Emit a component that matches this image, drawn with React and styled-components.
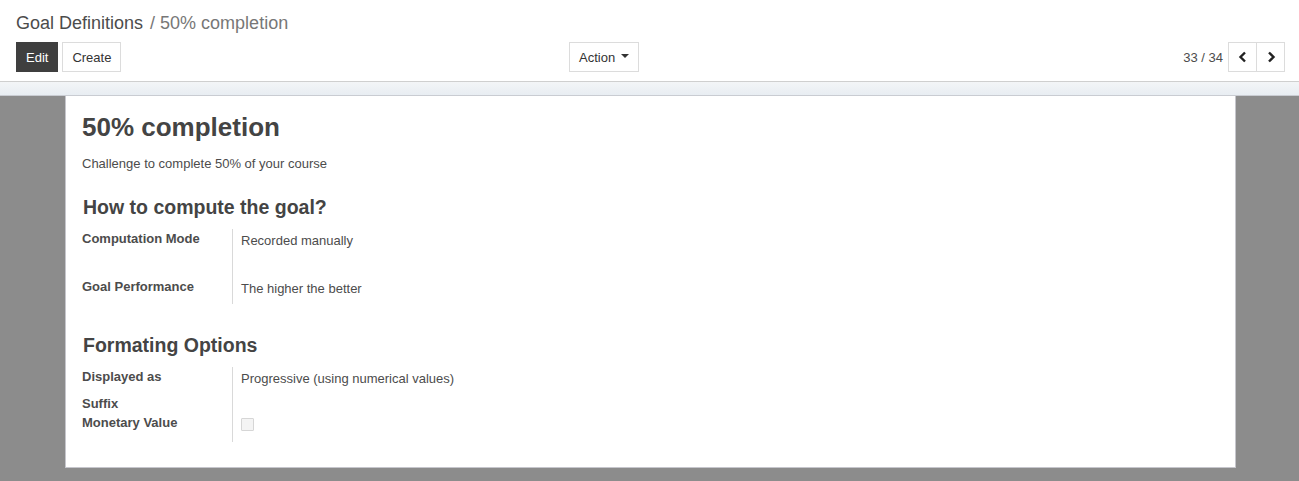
import React from "react";
import styled, { createGlobalStyle } from "styled-components";

const GlobalStyle = createGlobalStyle`
    html, body {
        margin: 0;
        padding: 0;
        height: 100%;
        background: #ffffff;
        font-family: "Liberation Sans", Arial, sans-serif;
        color: #4c4c4c;
    }
    #root {
        height: 100%;
    }
`;

const Page = styled.div`
    height: 481px;
    display: flex;
    flex-direction: column;
    overflow: hidden;
`;

const ControlPanel = styled.div`
    height: 82px;
    box-sizing: border-box;
    padding: 12px 14px 0 16px;
    border-bottom: 1px solid #cfcfcf;
    background: #ffffff;
`;

const Breadcrumb = styled.div`
    font-size: 18px;
    line-height: 22px;
    color: #4c4c4c;
    span {
        color: #777777;
        margin-left: 2px;
    }
`;

const ButtonBar = styled.div`
    margin-top: 8px;
    display: grid;
    grid-template-columns: 553px auto 1fr;
    align-items: center;
`;

const Group = styled.div`
    display: flex;
    align-items: center;
    gap: ${(p) => p.gap || 0}px;
    justify-content: ${(p) => p.justify || "flex-start"};
`;

const Button = styled.button`
    height: 30px;
    box-sizing: border-box;
    padding: 0 9px;
    font-family: inherit;
    font-size: 13px;
    border: 1px solid ${(p) => (p.primary ? "#3f3f3f" : "#dcdcdc")};
    background: ${(p) => (p.primary ? "#3f3f3f" : "#ffffff")};
    color: ${(p) => (p.primary ? "#ffffff" : "#333333")};
    display: flex;
    align-items: center;
    gap: 6px;
    cursor: pointer;
`;

const Caret = styled.span`
    width: 0;
    height: 0;
    border-left: 4px solid transparent;
    border-right: 4px solid transparent;
    border-top: 4px solid #333;
    margin-top: -3px;
`;

const PagerText = styled.span`
    font-size: 13px;
    color: #4c4c4c;
    margin-right: 5px;
`;

const PagerButton = styled(Button)`
    width: 29px;
    padding: 0;
    justify-content: center;
    & + & {
        margin-left: -1px;
    }
`;

const Strip = styled.div`
    height: 13px;
    background: linear-gradient(#f3f5f7, #e8edf2);
    border-bottom: 1px solid #c9ccd2;
`;

const SheetBg = styled.div`
    flex: 1;
    background: #8c8c8c;
    padding: 0 63px 0 65px;
`;

const Sheet = styled.div`
    background: #ffffff;
    border: 1px solid #c6c6cc;
    border-top: none;
    height: 372px;
    box-sizing: border-box;
    padding: 16px 16px 0 16px;
`;

const Title = styled.h1`
    margin: 0;
    font-size: 26px;
    line-height: 30px;
    font-weight: bold;
    color: #444444;
`;

const Description = styled.div`
    margin-top: 14px;
    font-size: 13px;
    line-height: 16px;
`;

const SectionTitle = styled.h2`
    margin: ${(p) => p.top}px 0 0 1px;
    font-size: 19.5px;
    line-height: 24px;
    font-weight: bold;
    color: #444444;
`;

const FieldTable = styled.div`
    margin-top: ${(p) => p.top}px;
    display: grid;
    grid-template-columns: 150px 1fr;
`;

const Label = styled.div`
    font-size: 13px;
    font-weight: bold;
    line-height: 16px;
    color: #4c4c4c;
    height: ${(p) => p.h}px;
    padding-top: ${(p) => p.pt || 0}px;
    box-sizing: border-box;
`;

const Value = styled.div`
    font-size: 13px;
    line-height: 16px;
    color: #4c4c4c;
    border-left: 1px solid #d9d9d9;
    padding-left: 8px;
    height: ${(p) => p.h}px;
    padding-top: ${(p) => p.pt || 0}px;
    box-sizing: border-box;
`;

const Checkbox = styled.span`
    display: block;
    width: 13px;
    height: 13px;
    box-sizing: border-box;
    border: 1px solid #d6d6d6;
    background: #f4f4f4;
    border-radius: 1px;
`;

const Chevron = ({ left }) => (
    <svg width="10" height="12" viewBox="0 0 10 12">
        <path
            d={left ? "M7 1.5 L2.5 6 L7 10.5" : "M3 1.5 L7.5 6 L3 10.5"}
            fill="none"
            stroke="#222"
            strokeWidth="2.4"
        />
    </svg>
);

const App = () => {
    return (
        <>
            <GlobalStyle />
            <Page>
                <ControlPanel>
                    <Breadcrumb>
                        Goal Definitions <span>/ 50% completion</span>
                    </Breadcrumb>
                    <ButtonBar>
                        <Group gap={4}>
                            <Button primary>Edit</Button>
                            <Button>Create</Button>
                        </Group>
                        <Group>
                            <Button>
                                Action <Caret />
                            </Button>
                        </Group>
                        <Group justify="flex-end">
                            <PagerText>33 / 34</PagerText>
                            <PagerButton>
                                <Chevron left />
                            </PagerButton>
                            <PagerButton>
                                <Chevron />
                            </PagerButton>
                        </Group>
                    </ButtonBar>
                </ControlPanel>
                <Strip />
                <SheetBg>
                    <Sheet>
                        <Title>50% completion</Title>
                        <Description>Challenge to complete 50% of your course</Description>

                        <SectionTitle top={23}>How to compute the goal?</SectionTitle>
                        <FieldTable top={10}>
                            <Label h={48} pt={2}>Computation Mode</Label>
                            <Value h={48} pt={4}>Recorded manually</Value>
                            <Label h={27} pt={2}>Goal Performance</Label>
                            <Value h={27} pt={4}>The higher the better</Value>
                        </FieldTable>

                        <SectionTitle top={29}>Formating Options</SectionTitle>
                        <FieldTable top={10}>
                            <Label h={28} pt={2}>Displayed as</Label>
                            <Value h={28} pt={4}>Progressive (using numerical values)</Value>
                            <Label h={19} pt={1}>Suffix</Label>
                            <Value h={19} />
                            <Label h={28} pt={1}>Monetary Value</Label>
                            <Value h={28} pt={4}>
                                <Checkbox />
                            </Value>
                        </FieldTable>
                    </Sheet>
                </SheetBg>
            </Page>
        </>
    );
};

export default App;
